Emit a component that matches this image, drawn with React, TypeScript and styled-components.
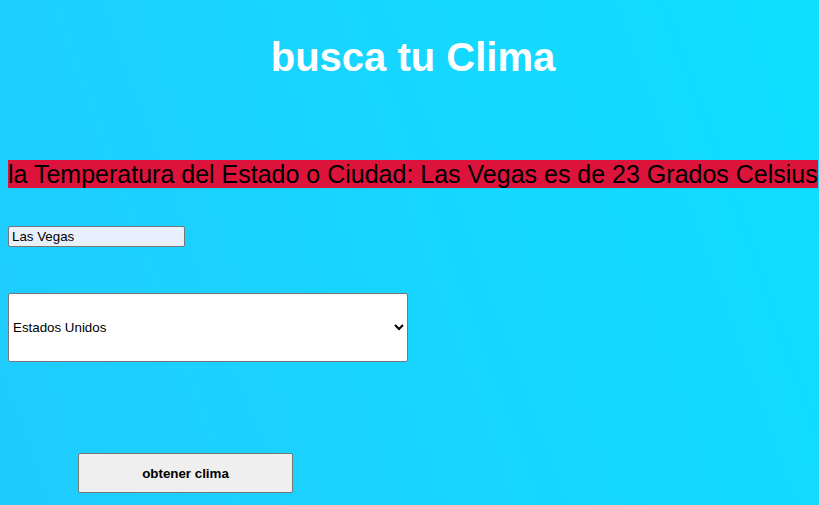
import React from "react";
import styled, { createGlobalStyle } from "styled-components";

const Global = createGlobalStyle`
  html, body { height: 100%; }
  body {
    margin: 0;
    padding: 8px;
    box-sizing: border-box;
    min-height: 505px;
    font-family: "Liberation Sans", Arial, sans-serif;
    background: linear-gradient(70deg, #20cbff 0%, #0edfff 100%);
    overflow: hidden;
  }
`;

const Page = styled.main`
  display: flex;
  flex-direction: column;
  align-items: flex-start;
`;

const Title = styled.h1`
  align-self: stretch;
  margin: 26px 0 0;
  padding-left: 7px;
  text-align: center;
  font-size: 40px;
  font-weight: bold;
  color: #ffffff;
  line-height: 46px;
`;

const Result = styled.p`
  margin: 80px 0 0;
  white-space: nowrap;
  font-size: 25px;
  line-height: 29px;
`;

const Highlight = styled.span`
  background: #dc143c;
  color: #000;
`;

const CityInput = styled.input`
  margin-top: 37px;
  width: 177px;
  height: 21px;
  box-sizing: border-box;
  padding: 1px 3px;
  font-family: "Liberation Sans", Arial, sans-serif;
  font-size: 13.33px;
  background: #e8f0fe;
  border: 1px solid #767676;
  border-radius: 2px;
  color: #000;
`;

const CountrySelect = styled.select`
  margin-top: 46px;
  width: 400px;
  height: 69px;
  box-sizing: border-box;
  padding: 0;
  font-family: "Liberation Sans", Arial, sans-serif;
  font-size: 13.33px;
  background: #fff;
  border: 1px solid #767676;
  border-radius: 2px;
  color: #000;
`;

const Submit = styled.button`
  margin: 91px 0 0 70px;
  width: 215px;
  height: 40px;
  font-family: "Liberation Sans", Arial, sans-serif;
  font-size: 13.33px;
  font-weight: bold;
  background: #efefef;
  border: 1px solid #767676;
  border-radius: 2px;
  color: #000;
`;

export default function App() {
  return (
    <>
      <Global />
      <Page>
        <Title>busca tu Clima</Title>
        <Result>
          <Highlight>
            la Temperatura del Estado o Ciudad: Las Vegas es de 23 Grados Celsius
          </Highlight>
        </Result>
        <CityInput defaultValue="Las Vegas" />
        <CountrySelect defaultValue="US">
          <option value="US">Estados Unidos</option>
          <option value="MX">México</option>
          <option value="AR">Argentina</option>
        </CountrySelect>
        <Submit>obtener clima</Submit>
      </Page>
    </>
  );
}
